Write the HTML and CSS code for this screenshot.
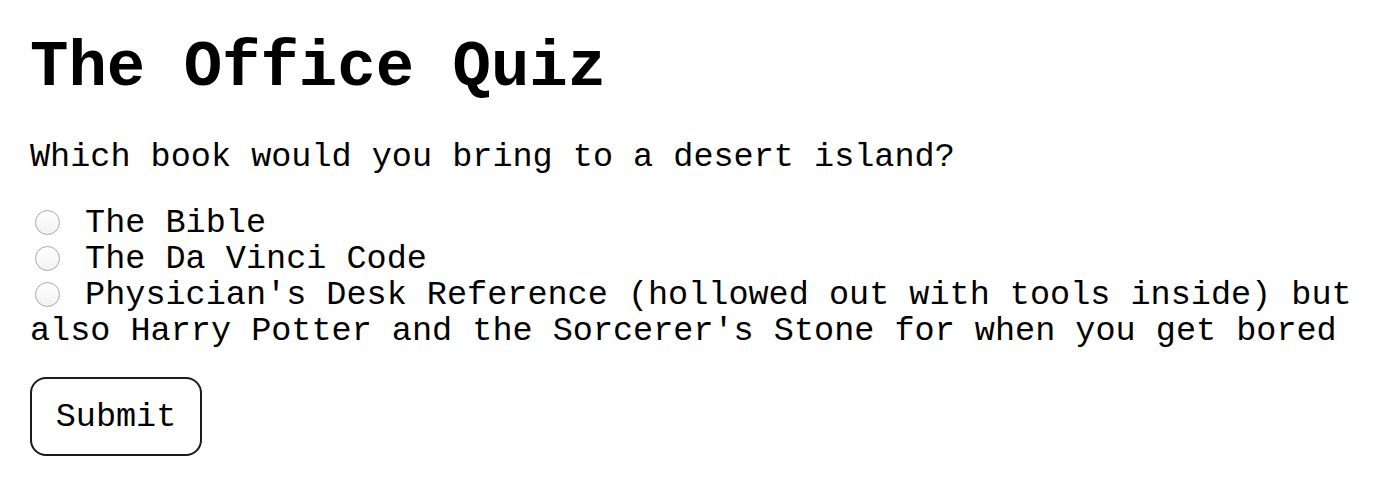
FILE: index.html
```html
<!DOCTYPE html>
<html>
<head>
<meta charset="utf-8">
<link rel="stylesheet" href="styles.css">
</head>
<body>
<main class="quiz">
  <h1 class="title">The Office Quiz</h1>
  <p class="question">Which book would you bring to a desert island?</p>
  <form class="options">
    <label class="option"><input class="radio" type="radio" name="book"> The Bible</label>
    <label class="option"><input class="radio" type="radio" name="book"> The Da Vinci Code</label>
    <label class="option"><input class="radio" type="radio" name="book"> Physician's Desk Reference (hollowed out with tools inside) but also Harry Potter and the Sorcerer's Stone for when you get bored</label>
  </form>
  <button class="submit" type="button">Submit</button>
</main>
</body>
</html>
```

FILE: styles.css
```css
html, body {
  margin: 0;
  padding: 0;
  background: #ffffff;
}

.quiz {
  padding: 36px 20px 0 30px;
  font-family: "Liberation Mono", "Courier New", monospace;
  color: #000;
}

.title {
  margin: 0;
  font-size: 64px;
  line-height: 64px;
  font-weight: bold;
}

.question {
  margin: 39px 0 0 0;
  font-size: 33.5px;
  line-height: 36px;
}

.options {
  margin: 30px 0 0 0;
  font-size: 33.5px;
  line-height: 36px;
}

.option {
  display: block;
}

.radio {
  appearance: none;
  -webkit-appearance: none;
  display: inline-block;
  box-sizing: border-box;
  width: 25px;
  height: 25px;
  margin: 0 5px 0 5px;
  vertical-align: -3px;
  border: 1px solid #a9a9a9;
  border-radius: 50%;
  background: linear-gradient(#ffffff, #f2f2f2);
}

.submit {
  margin-top: 28px;
  box-sizing: border-box;
  width: 172px;
  height: 79px;
  padding: 0;
  border: 2px solid #1a1a1a;
  border-radius: 16px;
  background: #ffffff;
  color: #000;
  font-family: "Liberation Mono", "Courier New", monospace;
  font-size: 33.5px;
}
```
